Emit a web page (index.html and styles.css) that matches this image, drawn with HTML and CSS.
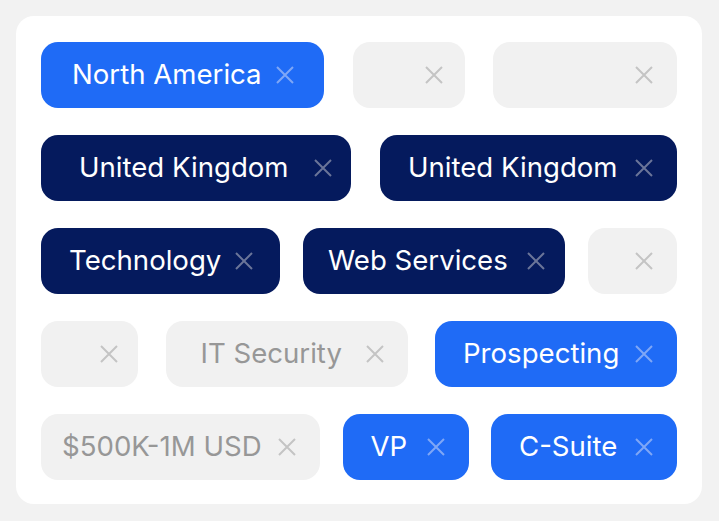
FILE: index.html
```html
<!DOCTYPE html>
<html lang="en">
<head>
<meta charset="utf-8">
<title>Filter chips</title>
<link rel="stylesheet" href="styles.css">
</head>
<body>
<div class="page">
  <div class="card">
    <div class="row row-1">
      <div class="chip chip--blue r1c1"><span class="label">North America</span><svg class="x" viewBox="0 0 18 18"><path d="M1 1L17 17M17 1L1 17"/></svg></div>
      <div class="chip chip--gray r1c2"><span class="label"></span><svg class="x" viewBox="0 0 18 18"><path d="M1 1L17 17M17 1L1 17"/></svg></div>
      <div class="chip chip--gray"><span class="label"></span><svg class="x" viewBox="0 0 18 18"><path d="M1 1L17 17M17 1L1 17"/></svg></div>
    </div>
    <div class="row row-2">
      <div class="chip chip--navy r2c1"><span class="label">United Kingdom</span><svg class="x" viewBox="0 0 18 18"><path d="M1 1L17 17M17 1L1 17"/></svg></div>
      <div class="chip chip--navy"><span class="label">United Kingdom</span><svg class="x" viewBox="0 0 18 18"><path d="M1 1L17 17M17 1L1 17"/></svg></div>
    </div>
    <div class="row row-3">
      <div class="chip chip--navy r3c1"><span class="label">Technology</span><svg class="x" viewBox="0 0 18 18"><path d="M1 1L17 17M17 1L1 17"/></svg></div>
      <div class="chip chip--navy r3c2"><span class="label">Web Services</span><svg class="x" viewBox="0 0 18 18"><path d="M1 1L17 17M17 1L1 17"/></svg></div>
      <div class="chip chip--gray"><span class="label"></span><svg class="x" viewBox="0 0 18 18"><path d="M1 1L17 17M17 1L1 17"/></svg></div>
    </div>
    <div class="row row-4">
      <div class="chip chip--gray r4c1"><span class="label"></span><svg class="x" viewBox="0 0 18 18"><path d="M1 1L17 17M17 1L1 17"/></svg></div>
      <div class="chip chip--gray r4c2"><span class="label">IT Security</span><svg class="x" viewBox="0 0 18 18"><path d="M1 1L17 17M17 1L1 17"/></svg></div>
      <div class="chip chip--blue"><span class="label">Prospecting</span><svg class="x" viewBox="0 0 18 18"><path d="M1 1L17 17M17 1L1 17"/></svg></div>
    </div>
    <div class="row row-5">
      <div class="chip chip--gray r5c1"><span class="label">$500K-1M USD</span><svg class="x" viewBox="0 0 18 18"><path d="M1 1L17 17M17 1L1 17"/></svg></div>
      <div class="chip chip--blue"><span class="label">VP</span><svg class="x" viewBox="0 0 18 18"><path d="M1 1L17 17M17 1L1 17"/></svg></div>
      <div class="chip chip--blue"><span class="label">C-Suite</span><svg class="x" viewBox="0 0 18 18"><path d="M1 1L17 17M17 1L1 17"/></svg></div>
    </div>
  </div>
</div>
</body>
</html>
```

FILE: styles.css
```css
* { box-sizing: border-box; }
html, body { margin: 0; padding: 0; }
body {
  background: #f2f2f2;
  font-family: Inter, "Noto Sans", sans-serif;
  width: 719px;
  height: 521px;
  overflow: hidden;
}
.page { padding: 16px 17px 17px 16px; }
.card {
  background: #ffffff;
  border-radius: 18px;
  width: 686px;
  height: 488px;
  padding: 26px 25px 24px 25px;
  display: flex;
  flex-direction: column;
  gap: 27px;
}
.row {
  display: grid;
  justify-content: space-between;
  height: 66px;
}
.row-1 { grid-template-columns: 283px 112px 184px; }
.row-2 { grid-template-columns: 310px 297px; }
.row-3 { grid-template-columns: 239px 262px 89px; }
.row-4 { grid-template-columns: 97px 242px 242px; }
.row-5 { grid-template-columns: 279px 126px 186px; }

.chip {
  height: 66px;
  border-radius: 17px;
  display: flex;
  align-items: center;
  padding: 0 24px 0 28px;
  font-size: 27.6px;
  letter-spacing: 0;
  white-space: nowrap;
}
.label { line-height: 1; }
.x {
  width: 18px;
  height: 18px;
  margin-left: auto;
  flex: none;
  fill: none;
  stroke-width: 2;
  stroke-linecap: butt;
}
.chip--blue { background: #1f6bf6; color: #ffffff; }
.chip--blue .x { stroke: #7fa7f6; }
.chip--navy { background: #051a5d; color: #ffffff; }
.chip--navy .x { stroke: #6b7599; }
.chip--gray { background: #f1f1f1; color: #979797; }
.chip--gray .x { stroke: #c4c4c4; }

.r1c1 { padding-left: 31px; padding-right: 30px; }
.r1c2 { padding-right: 22px; }
.r2c1 { padding-left: 38px; padding-right: 19px; }
.r3c1 { padding-right: 27px; }
.r3c2 { padding-left: 25px; padding-right: 20px; }
.r4c1 { padding-right: 20px; }
.r4c2 { padding-left: 35px; }
.r5c1 { padding-left: 21px; }
```
